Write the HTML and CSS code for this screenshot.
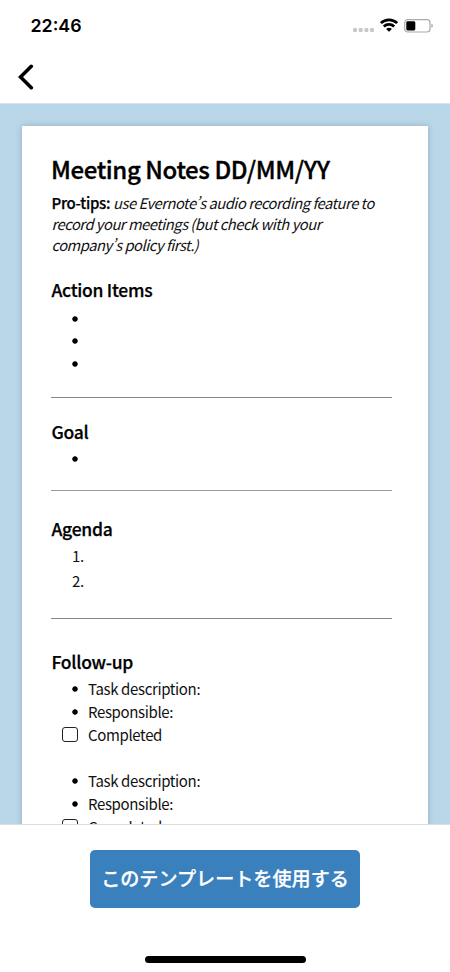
FILE: index.html
```html
<!DOCTYPE html>
<html lang="ja">
<head>
<meta charset="utf-8">
<meta name="viewport" content="width=device-width, initial-scale=1">
<title>Meeting Notes</title>
<link rel="stylesheet" href="styles.css">
</head>
<body>
<div class="screen">
  <header class="top">
    <div class="status">
      <span class="clock">22:46</span>
      <div class="indicators">
        <svg class="dots" width="22" height="6" viewBox="0 0 22 6" fill="#c8c8c8"><rect x="0" y="1" width="4" height="4" rx="1.3"/><rect x="5.7" y="1" width="4" height="4" rx="1.3"/><rect x="11.4" y="1" width="4" height="4" rx="1.3"/><rect x="17" y="1" width="4" height="4" rx="1.3"/></svg>
        <svg class="wifi" width="18" height="14" viewBox="0 0 18 14" fill="none" stroke="#000" stroke-width="2.7"><path d="M.9 5.1C5.3.7 12.7.7 17.1 5.1"/><path d="M3.8 8.5c2.9-2.8 7.500-2.800 10.400 0"/><path d="M6.1 10.900c1.700-1.400 4.100-1.400 5.800 0L9 13.800z" fill="#000" stroke="none"/></svg>
        <svg class="battery" width="30" height="14" viewBox="0 0 30 14"><rect x=".7" y=".7" width="25.3" height="12.3" rx="3" fill="none" stroke="#aaa" stroke-width="1.2"/><rect x="2.3" y="2.3" width="9" height="9.1" rx="1.4"/><path d="M27.4 4.800c2 .7 2 3.500 0 4.200z" fill="#aaa"/></svg>
      </div>
    </div>
    <nav class="nav">
      <svg width="16" height="26" viewBox="0 0 16 26" fill="none" stroke="#000" stroke-width="3.6" stroke-linecap="round" stroke-linejoin="miter"><path d="M13.300 2.300 2.500 13l10.800 10.700"/></svg>
    </nav>
  </header>
  <main class="preview">
    <article class="note">
      <h1>Meeting Notes DD/MM/YY</h1>
      <p class="tips"><b>Pro-tips:</b> <i>use Evernote’s audio recording feature to<br>record your meetings (but check with your<br>company’s policy first.)</i></p>
      <section class="actions">
        <h2>Action Items</h2>
        <ul><li></li><li></li><li></li></ul>
      </section>
      <section class="goal">
        <h2>Goal</h2>
        <ul><li></li></ul>
      </section>
      <section class="agenda">
        <h2>Agenda</h2>
        <ol><li>1.</li><li>2.</li></ol>
      </section>
      <section class="follow">
        <h2>Follow-up</h2>
        <ul><li>Task description:</li><li>Responsible:</li><li class="check">Completed</li></ul>
        <ul><li>Task description:</li><li>Responsible:</li><li class="check">Completed</li></ul>
      </section>
    </article>
  </main>
  <footer class="bottom">
    <button class="use">このテンプレートを使用する</button>
    <div class="home"></div>
  </footer>
</div>
</body>
</html>
```
FILE: styles.css
```css
*, *::before { box-sizing: border-box; margin: 0; padding: 0; }
body { background: #fff; color: #000; }
.screen {
  width: 450px;
  height: 972px;
  display: flex;
  flex-direction: column;
  overflow: hidden;
  font-family: "Noto Sans CJK JP", sans-serif;
}
.top { height: 104px; flex: none; border-bottom: 1px solid #d8e4ec; }
.status { height: 52px; display: flex; justify-content: space-between; padding: 0 16px 0 30.5px; }
.clock { font: 600 17.8px/52px Inter, sans-serif; }
.indicators { display: flex; align-items: flex-start; padding-top: 18px; }
.dots { margin: 9px 5px 0 0; }
.wifi { margin-right: 6px; }
.battery { margin-top: 1px; }
.nav { padding: 12px 0 0 18px; }
.nav svg { display: block; }
.preview { flex: none; height: 720px; background: #bad7e9; padding: 22px 22px 0; overflow: hidden; }
.note {
  height: 760px;
  background: #fff;
  padding: 27px 36px 0 29px;
  box-shadow: 0 0 6px rgba(50, 80, 100, .3);
  font-size: 15px;
  letter-spacing: -.36px;
}
h1 {
  font-size: 24px;
  line-height: 32px;
  font-weight: 500;
  letter-spacing: -.39px;
  white-space: nowrap;
  -webkit-text-stroke: .35px #000;
}
h2 {
  font-size: 17.5px;
  line-height: 24px;
  font-weight: 500;
  letter-spacing: -.28px;
  padding-left: .5px;
  -webkit-text-stroke: .25px #000;
}
.tips { margin-top: 8.4px; line-height: 20.8px; padding-left: .5px; white-space: nowrap; color: #111; }
.tips b { font-weight: 500; color: #000; letter-spacing: -.3px; -webkit-text-stroke: .25px #000; }
.tips i { font-size: 14.7px; letter-spacing: -.47px; }
ul, ol { list-style: none; }
li { display: flex; align-items: center; height: 22.7px; color: #111; }
ul li::before {
  content: "";
  width: 16px;
  height: 16px;
  background: radial-gradient(circle at 8px 8px, #000 2.3px, transparent 3.1px);
  margin: .8px 5px 0 16px;
  flex: none;
}
ul li.check::before {
  width: 16px;
  height: 15px;
  border: 1.3px solid #222;
  border-radius: 3px;
  background: none;
  margin: 0 10px 0 11px;
}
ol li { height: 24.7px; padding-left: 21px; }
.actions { margin-top: 22.6px; padding-bottom: 22px; border-bottom: 1px solid #888; }
.actions ul { margin-top: 4.4px; }
.goal { padding: 22px 0 19.5px; border-bottom: 1px solid #999; }
.goal ul { margin-top: 3.8px; }
.agenda { padding: 26px 0 24.4px; border-bottom: 1px solid #888; }
.agenda ol { margin-top: 2.8px; margin-bottom: .4px; }
.follow { padding-top: 31px; }
.follow ul { margin-top: 3.4px; }
.follow ul + ul { margin-top: 23px; }
.follow li { height: 23px; }
.bottom {
  height: 148px;
  flex: none;
  border-top: 1.5px solid #ddd;
  background: #fff;
  display: flex;
  flex-direction: column;
  align-items: center;
}
.use {
  margin-top: 24.5px;
  width: 270px;
  height: 58px;
  padding-bottom: 2px;
  flex: none;
  border: 0;
  border-radius: 5px;
  background: #3a80bd;
  color: #fff;
  font: 500 19.1px/56px "Noto Sans CJK JP", sans-serif;
  white-space: nowrap;
  -webkit-text-stroke: .25px #fff;
}
.home { width: 161px; height: 7px; margin-top: 48.5px; border-radius: 4px; background: #000; }
```
